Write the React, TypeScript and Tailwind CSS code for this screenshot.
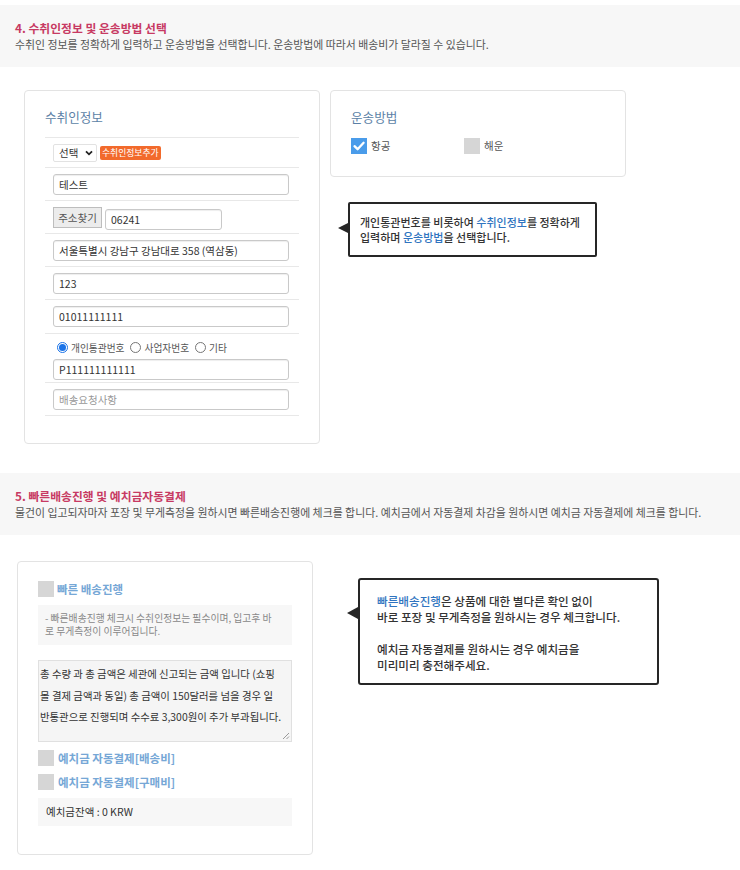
import React from 'react';

const font = "font-['Noto_Sans_CJK_KR','Noto_Sans',sans-serif]";

function Band({ title, desc }: { title: string; desc: string }) {
  return (
    <div className="h-[62px] bg-[#f7f7f7] px-[15px] flex flex-col justify-center">
      <div className="text-[11.8px] leading-[16px] font-bold text-[#c73a63]">{title}</div>
      <div className="text-[10.9px] leading-[16px] text-[#555]">{desc}</div>
    </div>
  );
}

function Field({ value, placeholder, w = 'w-[236px]' }: { value?: string; placeholder?: string; w?: string }) {
  return (
    <input
      readOnly
      defaultValue={value}
      placeholder={placeholder}
      className={`${w} h-[21px] border border-[#c9c9c9] rounded-[3px] bg-white px-[5px] text-[10.5px] text-[#333] placeholder:text-[#999] shadow-[inset_0_1px_1px_rgba(0,0,0,0.07)] outline-none`}
    />
  );
}

function Row({ children, h = 'h-[33px]' }: { children: React.ReactNode; h?: string }) {
  return <div className={`${h} flex items-center pl-[8px] border-b border-[#e8e8e8]`}>{children}</div>;
}

function GrayBox() {
  return <span className="w-[16px] h-[16px] bg-[#d6d6d6] shrink-0" />;
}

function CheckedBox() {
  return (
    <span className="w-[16px] h-[16px] bg-[#4a9cea] shrink-0 flex items-center justify-center">
      <svg width="16" height="16" viewBox="0 0 16 16">
        <polyline points="3.5,8.2 6.6,11.2 12.6,4.8" fill="none" stroke="#fff" strokeWidth="2.3" strokeLinecap="round" strokeLinejoin="round" />
      </svg>
    </span>
  );
}

function Radio({ label, checked }: { label: string; checked?: boolean }) {
  return (
    <label className="flex items-center gap-[3px] mr-[6px]">
      <span
        className={`w-[11px] h-[11px] rounded-full border flex items-center justify-center ${
          checked ? 'border-[#1a73e8]' : 'border-[#767676] bg-white'
        }`}
      >
        {checked && <span className="w-[7px] h-[7px] rounded-full bg-[#1a73e8]" />}
      </span>
      <span className="text-[9.7px] leading-[12px] text-[#555]">{label}</span>
    </label>
  );
}

export default function App() {
  return (
    <div className={`w-[740px] h-[870px] bg-white pt-[5px] ${font}`}>
      <Band
        title="4. 수취인정보 및 운송방법 선택"
        desc="수취인 정보를 정확하게 입력하고 운송방법을 선택합니다. 운송방법에 따라서 배송비가 달라질 수 있습니다."
      />

      <div className="mt-[23px] pl-[24px] flex items-start gap-[10px]">
        {/* 수취인정보 */}
        <div className="w-[296px] h-[354px] border border-[#e3e3e3] rounded-[4px] px-[20px] pt-[16px]">
          <div className="h-[20px] leading-[20px] text-[12.6px] text-[#5b7fa6]">수취인정보</div>
          <div className="mt-[10px] border-t border-[#e8e8e8]">
            <Row h="h-[30px]">
              <div className="w-[44px] h-[18px] border border-[#e2e2e2] rounded-[2px] bg-white flex items-center justify-between pl-[5px] pr-[3px]">
                <span className="text-[10.5px] leading-[12px] text-[#333]">선택</span>
                <svg width="8" height="6" viewBox="0 0 8 6">
                  <polyline points="1,1.3 4,4.3 7,1.3" fill="none" stroke="#222" strokeWidth="1.8" />
                </svg>
              </div>
              <span className="ml-[3px] h-[14px] px-[2px] rounded-[2px] bg-[#f26a2c] text-white text-[8.8px] leading-[14px]">
                수취인정보추가
              </span>
            </Row>
            <Row>
              <Field value="테스트" />
            </Row>
            <Row>
              <span className="w-[49px] h-[21px] border border-[#bdbdbd] bg-[#ececec] text-[10.5px] leading-[19px] text-[#555] text-center">
                주소찾기
              </span>
              <span className="ml-[3px]">
                <Field value="06241" w="w-[117px]" />
              </span>
            </Row>
            <Row>
              <Field value="서울특별시 강남구 강남대로 358 (역삼동)" />
            </Row>
            <Row>
              <Field value="123" />
            </Row>
            <Row h="h-[34px]">
              <Field value="01011111111" />
            </Row>
            <div className="h-[49px] pl-[8px] pt-[6px] border-b border-[#e8e8e8]">
              <div className="flex items-center pl-[4px] h-[15px]">
                <Radio label="개인통관번호" checked />
                <Radio label="사업자번호" />
                <Radio label="기타" />
              </div>
              <Field value="P111111111111" />
            </div>
            <Row>
              <Field placeholder="배송요청사항" />
            </Row>
          </div>
        </div>

        {/* 운송방법 */}
        <div className="flex flex-col">
          <div className="w-[296px] h-[87px] border border-[#e3e3e3] rounded-[4px] px-[20px] pt-[16px]">
            <div className="h-[20px] leading-[20px] text-[12.6px] text-[#5b7fa6]">운송방법</div>
            <div className="mt-[11px] flex items-center">
              <div className="w-[113px] flex items-center gap-[4px]">
                <CheckedBox />
                <span className="text-[10.5px] leading-[16px] text-[#555]">항공</span>
              </div>
              <div className="flex items-center gap-[4px]">
                <GrayBox />
                <span className="text-[10.5px] leading-[16px] text-[#555]">해운</span>
              </div>
            </div>
          </div>
          <div className="relative mt-[25px] ml-[18px] w-[249px] h-[55px] border-2 border-[#262626] rounded-[2px] bg-white flex items-center pl-[10px]">
            <span className="absolute left-[-12px] top-[19px] w-0 h-0 border-y-[5px] border-y-transparent border-r-[10px] border-r-[#262626]" />
            <p className="text-[11px] leading-[15px] font-medium text-[#333] whitespace-nowrap">
              개인통관번호를 비롯하여 <span className="text-[#2f74c0]">수취인정보</span>를 정확하게
              <br />
              입력하며 <span className="text-[#2f74c0]">운송방법</span>을 선택합니다.
            </p>
          </div>
        </div>
      </div>

      <div className="mt-[29px]">
        <Band
          title="5. 빠른배송진행 및 예치금자동결제"
          desc="물건이 입고되자마자 포장 및 무게측정을 원하시면 빠른배송진행에 체크를 합니다. 예치금에서 자동결제 차감을 원하시면 예치금 자동결제에 체크를 합니다."
        />
      </div>

      <div className="mt-[26px] pl-[17px] flex items-start">
        <div className="w-[296px] h-[294px] border border-[#e3e3e3] rounded-[4px] pl-[20px] pt-[19px]">
          <div className="flex items-center gap-[3px] h-[16px]">
            <GrayBox />
            <span className="text-[11.5px] leading-[16px] font-bold text-[#76a7d6]">빠른 배송진행</span>
          </div>
          <div className="mt-[8px] w-[254px] h-[40px] bg-[#f7f7f7] pl-[7px] flex items-center">
            <p className="text-[9.8px] leading-[13px] text-[#888] whitespace-nowrap">
              - 빠른배송진행 체크시 수취인정보는 필수이며, 입고후 바
              <br />로 무게측정이 이루어집니다.
            </p>
          </div>
          <div className="relative mt-[15px] w-[254px] h-[82px] bg-[#f5f5f5] border border-[#e0e0e0] pl-[1px] pt-[2px]">
            <p className="text-[10.4px] leading-[21.5px] text-[#333] whitespace-nowrap">
              총 수량 과 총 금액은 세관에 신고되는 금액 입니다 (쇼핑
              <br />몰 결제 금액과 동일) 총 금액이 150달러를 넘을 경우 일
              <br />반통관으로 진행되며 수수료 3,300원이 추가 부과됩니다.
            </p>
            <svg className="absolute right-[1px] bottom-[1px]" width="8" height="8" viewBox="0 0 8 8">
              <line x1="7" y1="1" x2="1" y2="7" stroke="#999" strokeWidth="1" />
              <line x1="7" y1="4.5" x2="4.5" y2="7" stroke="#999" strokeWidth="1" />
            </svg>
          </div>
          <div className="mt-[8px] flex items-center gap-[4px] h-[16px]">
            <GrayBox />
            <span className="text-[11.5px] leading-[16px] font-bold text-[#76a7d6]">예치금 자동결제[배송비]</span>
          </div>
          <div className="mt-[8px] flex items-center gap-[4px] h-[16px]">
            <GrayBox />
            <span className="text-[11.5px] leading-[16px] font-bold text-[#76a7d6]">예치금 자동결제[구매비]</span>
          </div>
          <div className="mt-[8px] w-[254px] h-[28px] bg-[#f7f7f7] pl-[8px] flex items-center">
            <span className="text-[10.5px] leading-[14px] text-[#333]">예치금잔액 : 0 KRW</span>
          </div>
        </div>

        <div className="relative ml-[45px] mt-[17px] w-[301px] h-[107px] border-2 border-[#262626] rounded-[3px] bg-white pl-[17px] pt-[13px]">
          <span className="absolute left-[-13px] top-[27px] w-0 h-0 border-y-[6px] border-y-transparent border-r-[11px] border-r-[#262626]" />
          <p className="text-[11.6px] leading-[16px] font-medium text-[#333] whitespace-nowrap">
            <span className="text-[#2f74c0]">빠른배송진행</span>은 상품에 대한 별다른 확인 없이
            <br />
            바로 포장 및 무게측정을 원하시는 경우 체크합니다.
            <br />
            <br />
            예치금 자동결제를 원하시는 경우 예치금을
            <br />
            미리미리 충전해주세요.
          </p>
        </div>
      </div>
    </div>
  );
}
